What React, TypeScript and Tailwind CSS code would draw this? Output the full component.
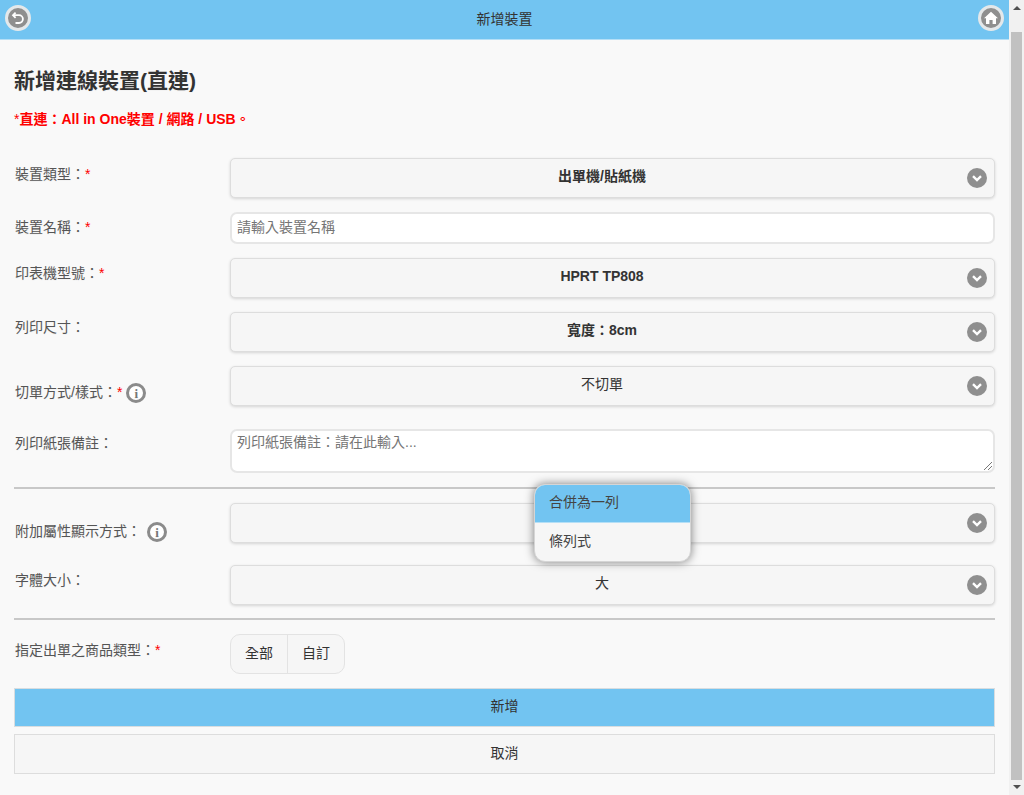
import type { ReactNode } from "react";

const font = { fontFamily: '"Liberation Sans", "Noto Sans CJK TC", sans-serif' };

function Chevron() {
  return (
    <span className="absolute right-[7px] top-1/2 -translate-y-1/2 w-[20px] h-[20px] rounded-full bg-[#8f8f8f] flex items-center justify-center">
      <svg width="12" height="12" viewBox="0 0 12 12" fill="none">
        <path d="M2 4.2 L6 8 L10 4.2" stroke="#fff" strokeWidth="2.4" />
      </svg>
    </span>
  );
}

function Info() {
  return (
    <span className="inline-flex w-[20px] h-[20px] rounded-full bg-white border-[3px] border-[#8b8b8b] items-center justify-center text-[13px] font-bold text-[#777] leading-none" style={{ fontFamily: '"Liberation Serif", serif' }}>
      i
    </span>
  );
}

function Star() {
  return <span className="text-[#f00]">*</span>;
}

function Row({ label, mt, children, labelTop = "pt-[7px]" }: { label: ReactNode; mt: string; children: ReactNode; labelTop?: string }) {
  return (
    <div className={`flex ${mt}`}>
      <div className={`w-[216px] shrink-0 pl-[1px] text-[14px] leading-[18px] text-[#555] [text-shadow:0_1px_0_#f3f3f3] ${labelTop}`}>{label}</div>
      <div className="flex-1">{children}</div>
    </div>
  );
}

function Select({ value, bold = false }: { value: string; bold?: boolean }) {
  return (
    <div className={`relative h-[40px] rounded-[5px] border border-[#dddddd] bg-[#f6f6f6] shadow-[0_1px_3px_rgba(0,0,0,0.15)] flex items-center justify-center pr-[21px] text-[14px] text-[#333] [text-shadow:0_1px_0_#f3f3f3] ${bold ? "font-bold" : ""}`}>
      <span className="pb-[3px]">{value}</span>
      <Chevron />
    </div>
  );
}

export default function App() {
  return (
    <div className="w-[1024px] h-[795px] flex overflow-hidden bg-[#f9f9f9]" style={font}>
      <div className="w-[1009px] shrink-0">
        {/* Header */}
        <div className="relative h-[40px] bg-[#72c4f1] border-b border-[#b5dff6] flex items-center justify-center text-[14px] text-[#333]">
          <span className="pb-[1px]">新增裝置</span>
          <span className="absolute left-[5px] top-[5px] w-[26px] h-[26px] rounded-full bg-[#8f8f8f] border-[3px] border-[#e4e8ea] flex items-center justify-center">
            <svg width="16" height="16" viewBox="0 0 16 16" fill="none">
              <path d="M5.6 2.6 L3 5.2 L5.6 7.8" stroke="#fff" strokeWidth="1.8" />
              <path d="M3.4 5.2 H9 A3.9 3.9 0 0 1 9 13 H5.5" stroke="#fff" strokeWidth="1.8" />
            </svg>
          </span>
          <span className="absolute left-[978px] top-[5px] w-[26px] h-[26px] rounded-full bg-[#8f8f8f] border-[3px] border-[#e4e8ea] flex items-center justify-center">
            <svg width="16" height="16" viewBox="0 0 16 16" fill="#fff">
              <path d="M8 1.8 L15 8.2 L13 8.2 L13 14 L9.6 14 L9.6 10 L6.4 10 L6.4 14 L3 14 L3 8.2 L1 8.2 Z" />
            </svg>
          </span>
        </div>

        <div className="pl-[14px] pr-[14px]">
          <h1 className="mt-[29px] text-[21px] leading-[24px] font-bold text-[#333] [text-shadow:0_1px_0_#f3f3f3]">新增連線裝置(直連)</h1>
          <p className="mt-[17px] text-[14px] leading-[18px] font-bold text-[#f00]">
            <span className="font-normal">*</span>直連：All in One裝置 / 網路 / USB。
          </p>

          <Row mt="mt-[30px]" label={<>裝置類型：<Star /></>}>
            <Select value="出單機/貼紙機" bold />
          </Row>
          <Row mt="mt-[14px]" labelTop="pt-[6px]" label={<>裝置名稱：<Star /></>}>
            <div className="h-[32px] rounded-[7px] border-2 border-[#e6e6e6] bg-white px-[5px] pb-[2px] flex items-center text-[14px] text-[#757575]">請輸入裝置名稱</div>
          </Row>
          <Row mt="mt-[14px]" labelTop="pt-[6px]" label={<>印表機型號：<Star /></>}>
            <Select value="HPRT TP808" bold />
          </Row>
          <Row mt="mt-[14px]" labelTop="pt-[6px]" label="列印尺寸：">
            <Select value="寬度：8cm" bold />
          </Row>
          <Row
            mt="mt-[14px]"
            labelTop="pt-[15px]"
            label={
              <span className="flex items-center">
                切單方式/樣式：<Star /><span className="ml-[4px] mt-[2px] flex"><Info /></span>
              </span>
            }
          >
            <Select value="不切單" />
          </Row>
          <Row mt="mt-[23px]" labelTop="pt-[5px]" label="列印紙張備註：">
            <div className="relative h-[44px] rounded-[7px] border-2 border-[#e6e6e6] bg-white px-[5px] pt-[2px] text-[14px] leading-[18px] text-[#757575]">
              列印紙張備註：請在此輸入...
              <svg className="absolute right-0 bottom-0" width="10" height="10" viewBox="0 0 10 10" stroke="#777" strokeWidth="1">
                <path d="M1 9 L9 1 M5 9 L9 5" />
              </svg>
            </div>
          </Row>

          <div className="mt-[14px] h-[2px] bg-[#c8c8c8]" />

          <Row
            mt="mt-[14px]"
            labelTop="pt-[16px]"
            label={
              <span className="flex items-center">
                附加屬性顯示方式：<span className="ml-[6px] mt-[3px] flex"><Info /></span>
              </span>
            }
          >
            <div className="relative">
              <Select value="" />
              {/* open menu */}
              <div className="absolute left-[304px] top-[-19px] w-[157px] rounded-[11px] border border-[#d5d5d5] bg-[#f6f6f6] shadow-[0_0_10px_rgba(0,0,0,0.5)] overflow-hidden text-[14px] text-[#444] z-10">
                <div className="h-[38px] bg-[#72c4f1] border-b border-[#b5dff6] flex items-center pl-[14px] pb-[2px]">合併為一列</div>
                <div className="h-[38px] flex items-center pl-[14px] pb-[2px]">條列式</div>
              </div>
            </div>
          </Row>
          <Row mt="mt-[22px]" labelTop="pt-[6px]" label="字體大小：">
            <Select value="大" />
          </Row>

          <div className="mt-[13px] h-[2px] bg-[#c8c8c8]" />

          <Row mt="mt-[14px]" labelTop="pt-[7px]" label={<>指定出單之商品類型：<Star /></>}>
            <div className="inline-flex h-[40px] rounded-[10px] border border-[#e3e3e3] bg-[#f6f6f6] text-[14px] text-[#333] overflow-hidden">
              <div className="w-[57px] border-r border-[#e3e3e3] flex items-center justify-center pb-[1px]">全部</div>
              <div className="w-[56px] flex items-center justify-center pb-[1px]">自訂</div>
            </div>
          </Row>

          <div className="mt-[14px] h-[39px] border border-[#d8dde0] bg-[#72c4f1] flex items-center justify-center pb-[2px] text-[14px] text-[#333]">新增</div>
          <div className="mt-[7px] h-[40px] border border-[#dddddd] bg-[#f6f6f6] flex items-center justify-center pb-[2px] text-[14px] text-[#333]">取消</div>
        </div>
      </div>

      {/* Scrollbar */}
      <div className="w-[15px] shrink-0 bg-[#f1f1f1] flex flex-col items-center">
        <div className="h-[32px] pt-[6px]">
          <div className="w-0 h-0 border-x-[4px] border-x-transparent border-b-[4px] border-b-[#505050]" />
        </div>
        <div className="w-[11px] h-[748px] shrink-0 bg-[#c1c1c1]" />
        <div className="pt-[5px]">
          <div className="w-0 h-0 border-x-[4px] border-x-transparent border-t-[4px] border-t-[#505050]" />
        </div>
      </div>
    </div>
  );
}
